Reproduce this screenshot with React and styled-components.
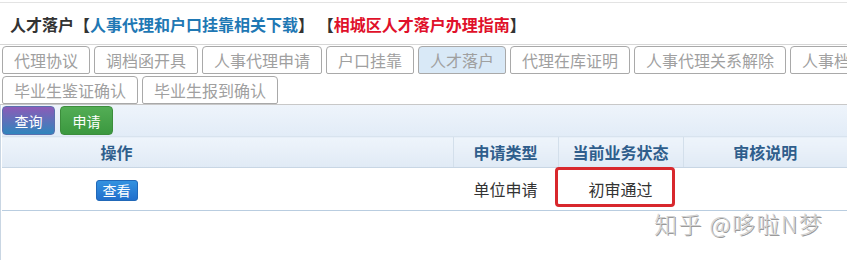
import styled, { createGlobalStyle } from "styled-components";

const GlobalStyle = createGlobalStyle`
  html, body {
    margin: 0;
    padding: 0;
    background: #fff;
    overflow: hidden;
  }
  body {
    font-family: "Noto Sans CJK SC", "Microsoft YaHei", sans-serif;
  }
`;

const TABS = [
  "代理协议",
  "调档函开具",
  "人事代理申请",
  "户口挂靠",
  "人才落户",
  "代理在库证明",
  "人事代理关系解除",
  "人事档案借阅",
  "毕业生鉴证确认",
  "毕业生报到确认",
];

function App() {
  return (
    <Page>
      <GlobalStyle />
      <TitleBar>
        人才落户【<LinkText>人事代理和户口挂靠相关下载</LinkText>】 【
        <LinkText $red>相城区人才落户办理指南</LinkText>】
      </TitleBar>

      <TabList>
        {TABS.map(tab => (
          <Tab key={tab} $active={tab === "人才落户"}>
            {tab}
          </Tab>
        ))}
      </TabList>

      <Panel>
        <Toolbar>
          <ToolButton $kind="query">查询</ToolButton>
          <ToolButton $kind="apply">申请</ToolButton>
        </Toolbar>

        <Table>
          <colgroup>
            <col style={{ width: 229 }} />
            <col style={{ width: 222 }} />
            <col style={{ width: 105 }} />
            <col style={{ width: 125 }} />
            <col />
          </colgroup>
          <thead>
            <tr>
              <HeadCell $first>操作</HeadCell>
              <HeadCell $first />
              <HeadCell>申请类型</HeadCell>
              <HeadCell>当前业务状态</HeadCell>
              <HeadCell>审核说明</HeadCell>
            </tr>
          </thead>
          <tbody>
            <tr>
              <Cell>
                <ViewButton>查看</ViewButton>
              </Cell>
              <Cell />
              <Cell>单位申请</Cell>
              <StatusCell>
                初审通过
                <Highlight />
              </StatusCell>
              <Cell />
            </tr>
          </tbody>
        </Table>

        <Watermark>知乎 @哆啦N梦</Watermark>
      </Panel>
    </Page>
  );
}

const Page = styled.div`
  position: relative;
  width: 847px;
  height: 260px;
  overflow: hidden;
`;

const TitleBar = styled.div`
  margin-top: 2px;
  height: 41px;
  padding-left: 10px;
  display: flex;
  align-items: center;
  border-top: 1px solid #e3e3e3;
  border-bottom: 1px solid #d6d6d6;
  color: #333;
  font-size: 16px;
  font-weight: bold;
  white-space: nowrap;
`;

const LinkText = styled.span`
  color: ${({ $red }) => ($red ? "#e0102a" : "#1f78b4")};
`;

const TabList = styled.div`
  display: flex;
  flex-wrap: wrap;
  gap: 2px 4px;
  width: 940px;
  padding: 1px 2px 0;
  border-bottom: 1px solid #c8c8c8;
`;

const Tab = styled.div`
  box-sizing: border-box;
  height: 28px;
  padding: 0 11px;
  display: flex;
  align-items: center;
  border: 1px solid #a9a9a9;
  border-radius: 4px 4px 2px 2px;
  background: ${({ $active }) => ($active ? "#d9e9f7" : "#fff")};
  color: #a0a0a0;
  font-size: 16px;
  white-space: nowrap;
`;

const Panel = styled.div`
  position: relative;
  height: 160px;
  padding-left: 1px;
  border-left: 1px solid #c9d6e3;
`;

const Toolbar = styled.div`
  height: 31px;
  display: flex;
  align-items: center;
  gap: 5px;
  background: linear-gradient(#eef4fb, #e2ecf7);
`;

const ToolButton = styled.button`
  box-sizing: border-box;
  width: 53px;
  height: 29px;
  padding: 0;
  border: 1px solid
    ${({ $kind }) => ($kind === "query" ? "#5a6fae" : "#3c8d3c")};
  border-radius: 4px;
  background: ${({ $kind }) =>
    $kind === "query"
      ? "linear-gradient(#8d5bb7, #2f86bd)"
      : "linear-gradient(#53ad55, #3b983f)"};
  color: #fff;
  font-family: inherit;
  font-size: 14px;
`;

const Table = styled.table`
  width: 100%;
  border-collapse: collapse;
  table-layout: fixed;
`;

const HeadCell = styled.th`
  height: 30px;
  padding: 0;
  border-top: 1px solid #d8e3ee;
  border-bottom: 1px solid #c8d6e4;
  border-left: ${({ $first }) => ($first ? "none" : "1px solid #d3dfeb")};
  background: linear-gradient(#eef4fb, #e0eaf5);
  color: #2f5e8c;
  font-size: 16px;
  font-weight: bold;
  text-align: center;
`;

const Cell = styled.td`
  height: 42px;
  padding: 0;
  border-bottom: 1px solid #b9cde0;
  color: #333;
  font-size: 16px;
  text-align: center;
`;

const StatusCell = styled(Cell)`
  position: relative;
`;

const Highlight = styled.span`
  position: absolute;
  left: -3px;
  top: -1px;
  width: 120px;
  height: 40px;
  box-sizing: border-box;
  border: 3px solid #d8282d;
  border-radius: 4px;
`;

const ViewButton = styled.button`
  box-sizing: border-box;
  width: 42px;
  height: 21px;
  padding: 0;
  border: 1px solid #2168b8;
  border-radius: 3px;
  background: linear-gradient(#3392e0, #216fcc);
  color: #fff;
  font-family: inherit;
  font-size: 14px;
  line-height: 19px;
`;

const Watermark = styled.div`
  position: absolute;
  left: 653px;
  top: 101px;
  color: #d2d2d2;
  font-size: 23px;
  font-weight: 300;
  letter-spacing: 1.5px;
  text-shadow: 1px 1px 0 #9a9a9a;
  white-space: nowrap;
`;

export default App;
